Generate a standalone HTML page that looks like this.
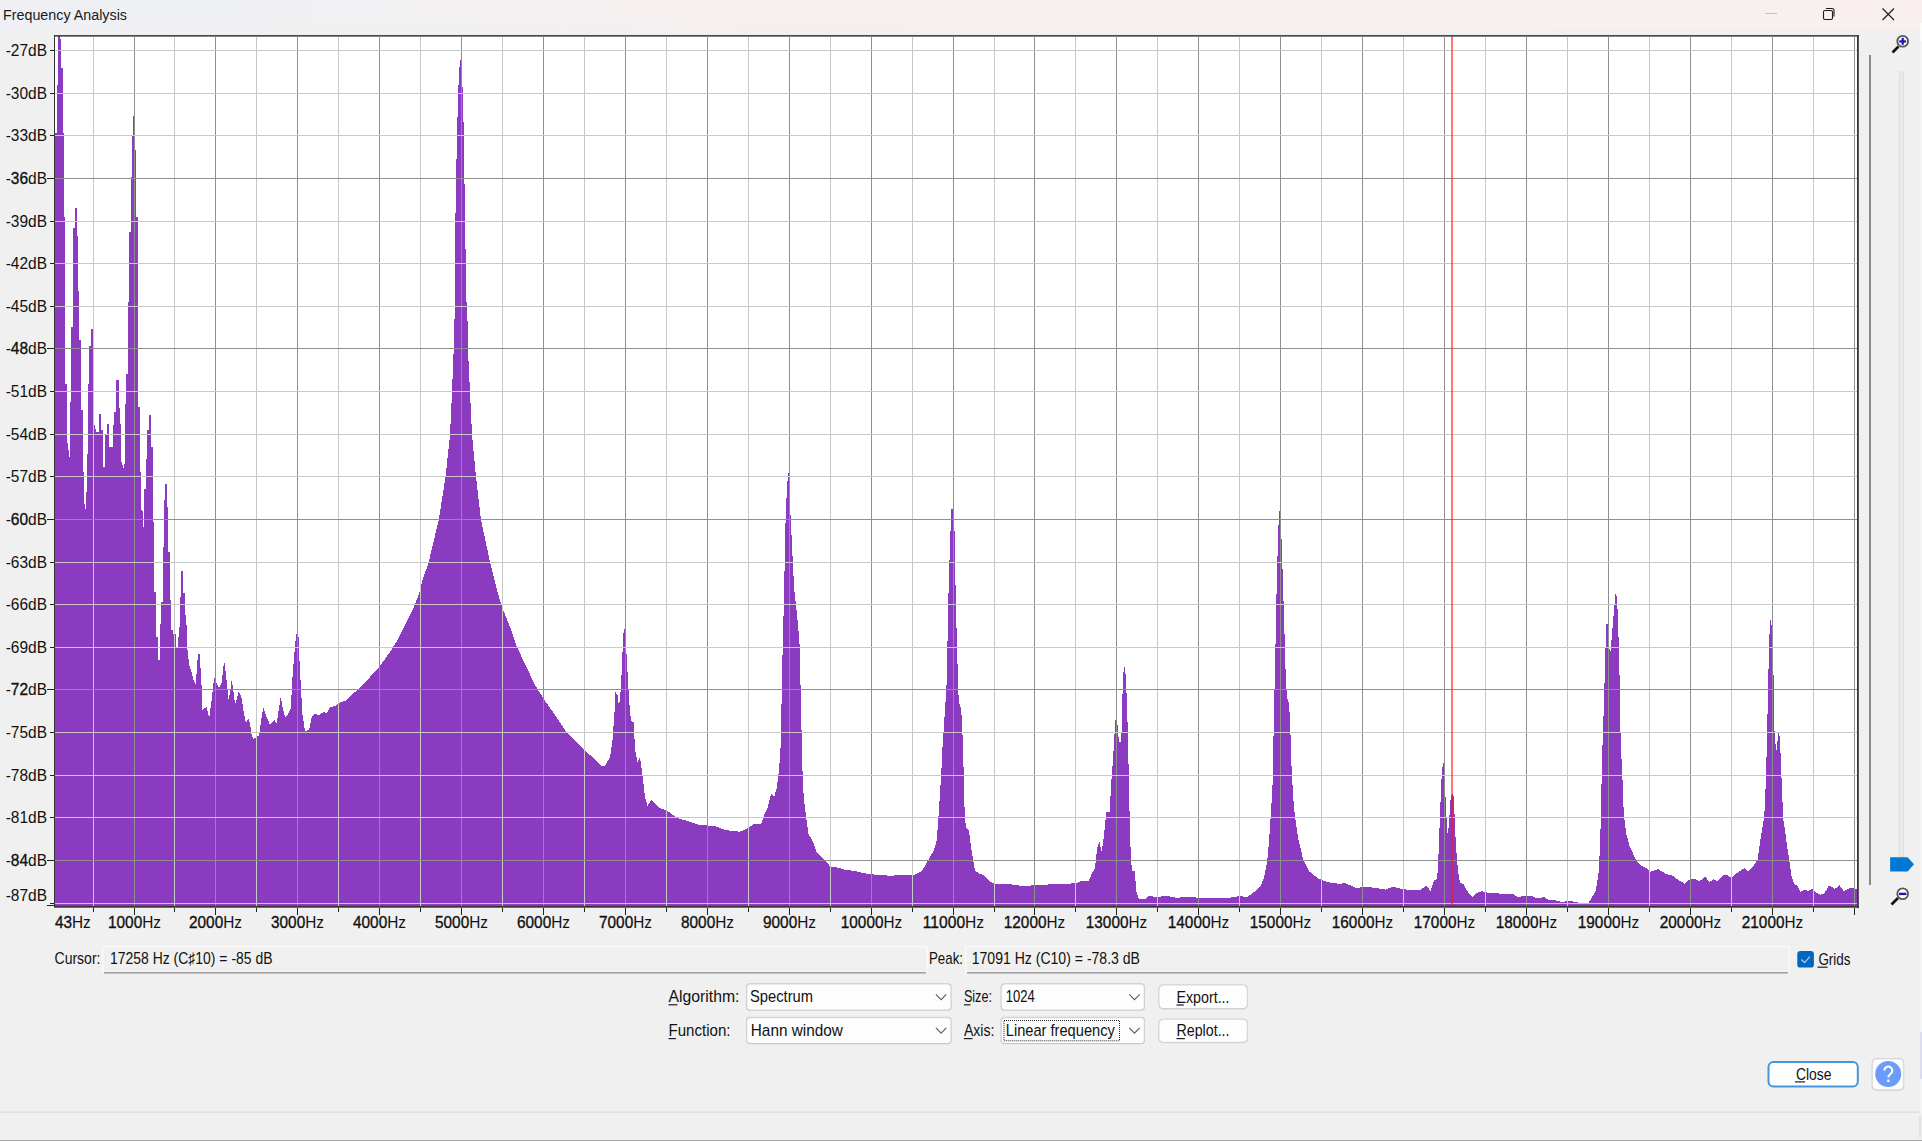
<!DOCTYPE html>
<html><head><meta charset="utf-8"><style>
html,body{margin:0;padding:0;width:1922px;height:1141px;overflow:hidden;background:#f0f0f0;}
</style></head><body>
<svg width="1922" height="1141" viewBox="0 0 1922 1141" style="position:absolute;left:0;top:0">
<defs><linearGradient id="tb" x1="0" x2="1" y1="0" y2="0"><stop offset="0" stop-color="#eef0f5"/><stop offset="0.1" stop-color="#eff0f4"/><stop offset="0.25" stop-color="#f3f0f1"/><stop offset="0.4" stop-color="#f7efee"/><stop offset="1" stop-color="#f8efee"/></linearGradient></defs>
<rect x="0" y="0" width="1922" height="1141" fill="#f0f0f0"/>
<rect x="0" y="0" width="1922" height="29" fill="url(#tb)"/>
<text x="3" y="19.7" font-family='"Liberation Sans", sans-serif' font-size="15.4" fill="#1a1a1a" textLength="124" lengthAdjust="spacingAndGlyphs">Frequency Analysis</text>
<rect x="1765" y="13" width="12" height="1" fill="#c4c0c0"/>
<g fill="none" stroke="#1a1a1a" stroke-width="1.1"><rect x="1823.5" y="10.5" width="9" height="9" rx="1.5"/><path d="M1826 8.5 h6 a2 2 0 0 1 2 2 v6"/></g>
<path d="M1882.5 8.5 L1894 20 M1894 8.5 L1882.5 20" stroke="#1a1a1a" stroke-width="1.1"/>
<rect x="54" y="35" width="1803" height="871" fill="#ffffff"/>
<path d="M55.0 906.0 L54.0 133.0 L56.5 133.0 L56.5 85.0 L57.9 85.0 L57.9 36.0 L59.6 36.0 L59.6 39.0 L61.4 39.0 L61.4 68.0 L62.6 68.0 L62.6 133.0 L63.7 133.0 L63.7 217.0 L65.0 217.0 L65.0 303.0 L65.2 384.0 L67.0 384.0 L67.0 440.0 L69.5 457.0 L69.5 402.0 L71.0 402.0 L71.0 327.0 L72.7 327.0 L72.7 300.0 L73.5 228.0 L74.7 228.0 L74.7 208.0 L76.5 208.0 L76.5 236.0 L77.7 236.0 L77.7 277.0 L79.0 300.0 L79.0 340.0 L81.0 340.0 L81.0 410.0 L82.7 410.0 L82.7 472.0 L84.0 472.0 L84.0 502.0 L86.0 511.0 L87.7 447.0 L89.0 346.0 L91.0 346.0 L91.0 329.0 L92.7 329.0 L92.7 387.0 L94.4 387.0 L94.4 425.0 L96.4 432.0 L99.0 432.0 L99.0 414.0 L101.0 414.0 L101.0 430.0 L102.7 430.0 L102.7 467.0 L104.7 467.0 L105.2 435.0 L107.0 435.0 L107.0 424.0 L109.0 424.0 L109.5 447.0 L112.7 447.0 L114.0 412.0 L115.7 412.0 L116.5 380.0 L118.5 380.0 L119.0 400.0 L121.0 432.0 L121.5 462.0 L124.4 471.0 L126.0 374.0 L127.7 374.0 L127.7 302.0 L129.4 302.0 L129.4 232.0 L130.9 232.0 L130.9 177.0 L132.0 177.0 L132.0 136.0 L132.7 136.0 L132.7 116.0 L134.0 116.0 L134.0 150.0 L136.0 150.0 L136.0 217.0 L137.6 217.0 L137.6 312.0 L137.6 407.0 L140.0 407.0 L140.0 472.0 L141.4 472.0 L141.4 510.0 L142.5 511.0 L142.5 527.0 L143.7 527.0 L144.0 489.0 L146.0 489.0 L147.0 430.0 L149.0 430.0 L149.0 415.0 L151.0 415.0 L151.0 447.0 L152.5 447.0 L152.5 488.0 L154.0 538.0 L154.0 592.0 L156.0 592.0 L156.0 637.0 L157.5 637.0 L157.5 660.0 L159.7 660.0 L161.0 602.0 L162.5 602.0 L162.5 547.0 L164.0 547.0 L164.0 500.0 L165.0 500.0 L165.0 484.0 L166.7 484.0 L166.7 507.0 L168.3 507.0 L168.3 552.0 L170.0 552.0 L170.0 600.0 L171.3 600.0 L171.3 630.0 L173.3 630.0 L173.3 634.0 L175.8 634.0 L175.8 648.0 L178.3 648.0 L178.7 627.0 L180.0 627.0 L180.0 597.0 L181.3 597.0 L181.3 571.0 L183.0 571.0 L183.0 593.0 L184.7 593.0 L184.7 615.0 L186.3 615.0 L186.7 633.0 L187.5 650.0 L189.2 665.0 L190.8 670.0 L194.2 682.0 L195.8 684.0 L197.5 660.0 L199.2 650.0 L200.3 664.0 L201.7 688.0 L202.5 710.0 L205.0 708.0 L206.7 707.0 L209.2 718.0 L211.7 700.0 L214.2 677.0 L216.7 683.0 L219.2 688.0 L221.7 683.0 L224.2 660.0 L225.8 673.0 L227.5 690.0 L228.3 700.0 L230.0 693.0 L231.7 679.0 L233.3 690.0 L235.0 704.0 L236.7 699.0 L238.7 691.0 L241.7 698.0 L243.3 710.0 L245.8 723.0 L248.3 719.0 L250.0 723.0 L251.7 735.0 L253.3 739.0 L256.7 737.0 L259.2 735.0 L261.7 717.0 L263.3 707.0 L265.8 715.0 L270.0 725.0 L274.2 720.0 L276.7 723.0 L279.2 707.0 L280.8 696.0 L282.5 707.0 L285.0 717.0 L288.3 714.0 L290.8 708.0 L292.5 677.0 L294.2 655.0 L295.8 638.0 L297.0 631.0 L298.3 632.0 L299.2 655.0 L300.8 686.0 L302.5 715.0 L305.0 731.0 L309.2 730.0 L311.7 717.0 L314.2 714.0 L319.2 715.0 L323.3 712.0 L326.7 713.0 L330.0 707.5 L335.0 706.0 L338.3 703.0 L345.0 701.0 L355.0 692.0 L362.5 685.0 L370.0 677.0 L380.0 666.0 L390.0 652.0 L397.5 640.0 L405.0 625.0 L412.5 610.0 L418.7 595.0 L422.5 580.0 L426.0 570.0 L428.7 562.0 L438.7 520.0 L445.5 477.0 L450.0 435.0 L452.0 392.0 L453.7 350.0 L455.0 300.0 L455.0 243.5 L456.2 172.0 L457.5 117.0 L458.7 80.0 L460.0 60.0 L461.7 60.0 L461.7 87.0 L463.0 87.0 L463.7 135.0 L465.0 213.0 L466.2 296.0 L467.5 321.0 L468.0 350.0 L470.0 392.0 L472.0 435.0 L476.0 477.0 L481.0 520.0 L490.0 562.0 L492.0 570.0 L497.0 590.0 L502.0 607.0 L510.0 627.0 L517.0 647.0 L525.0 664.0 L535.0 685.0 L543.7 699.0 L555.0 715.0 L565.0 730.0 L575.0 741.0 L585.0 751.0 L595.0 759.0 L601.0 766.0 L605.0 766.0 L610.0 757.0 L612.5 740.0 L614.5 712.0 L615.5 692.0 L617.5 695.0 L619.0 707.0 L621.0 687.0 L622.5 652.0 L623.7 630.0 L625.0 629.0 L626.0 644.0 L627.5 672.0 L629.5 705.0 L631.0 721.0 L633.7 722.0 L635.0 750.0 L637.5 762.0 L640.0 757.0 L642.5 775.0 L645.0 797.0 L647.5 806.0 L651.0 800.0 L660.0 808.0 L667.5 811.0 L677.5 818.0 L687.5 821.0 L700.0 825.0 L715.0 826.0 L725.0 830.0 L740.0 831.7 L746.5 829.0 L754.7 823.5 L761.2 824.4 L764.5 813.8 L767.7 808.0 L771.0 793.4 L774.2 796.6 L776.7 788.5 L778.8 772.0 L780.4 752.6 L781.2 720.0 L782.5 655.0 L784.2 589.0 L785.2 531.0 L786.7 494.0 L788.0 472.5 L789.0 472.5 L790.0 505.0 L791.7 539.0 L793.0 566.0 L794.2 589.0 L796.2 607.0 L798.0 625.0 L799.5 644.0 L800.7 692.0 L801.2 720.0 L802.0 746.0 L802.8 785.0 L804.4 803.0 L806.0 816.0 L808.5 834.0 L812.6 840.7 L816.6 852.0 L823.2 858.6 L830.5 866.7 L837.8 867.6 L846.0 870.0 L854.0 870.8 L864.0 873.3 L878.6 875.0 L890.0 875.7 L903.0 875.0 L914.5 875.0 L921.0 871.6 L924.2 867.6 L929.0 858.6 L934.0 850.4 L936.5 840.7 L938.0 824.4 L939.7 798.0 L941.2 775.0 L942.5 747.5 L945.0 710.0 L946.5 685.0 L947.5 641.0 L948.7 584.0 L950.5 531.0 L951.5 509.0 L952.7 509.0 L954.5 531.0 L955.5 585.0 L957.0 649.0 L958.7 701.0 L960.7 707.5 L962.0 720.0 L963.4 760.8 L964.2 801.5 L965.8 827.6 L969.0 831.0 L971.5 850.4 L974.8 870.0 L978.4 873.2 L984.0 875.4 L990.7 882.0 L997.4 884.4 L1010.9 884.4 L1022.0 886.0 L1042.3 884.9 L1055.8 884.0 L1077.0 883.3 L1080.4 881.0 L1088.3 881.0 L1091.6 874.3 L1095.0 867.6 L1097.3 847.4 L1099.5 841.8 L1101.7 852.0 L1104.0 835.0 L1106.2 812.6 L1109.6 811.5 L1111.4 780.0 L1113.0 760.0 L1114.5 734.0 L1115.9 715.0 L1117.4 724.0 L1119.0 742.0 L1121.3 742.0 L1122.0 710.6 L1123.0 677.0 L1124.2 664.6 L1125.7 675.8 L1127.0 702.7 L1128.2 747.6 L1129.3 803.7 L1130.7 854.0 L1132.0 871.0 L1134.7 871.0 L1136.5 892.3 L1138.7 899.0 L1145.5 899.0 L1148.8 895.6 L1156.7 897.4 L1165.7 895.6 L1176.9 897.9 L1188.0 896.7 L1199.3 897.9 L1210.0 897.7 L1226.3 898.5 L1239.3 896.0 L1247.5 897.0 L1254.0 892.0 L1260.5 886.3 L1263.8 878.0 L1266.3 866.7 L1267.9 855.3 L1269.5 834.0 L1271.1 811.0 L1272.5 785.0 L1273.0 760.0 L1274.2 704.0 L1275.5 644.0 L1276.7 585.0 L1278.0 539.0 L1279.0 511.0 L1280.2 511.0 L1281.2 530.0 L1282.5 569.0 L1284.2 622.5 L1285.7 675.0 L1287.0 697.5 L1289.0 704.0 L1290.0 720.0 L1291.5 765.7 L1293.2 798.0 L1294.8 814.6 L1298.0 837.4 L1303.0 858.6 L1309.5 871.6 L1317.6 878.2 L1327.4 882.2 L1340.4 883.9 L1344.5 883.0 L1356.7 888.0 L1366.5 886.6 L1386.0 889.6 L1392.6 886.6 L1400.8 888.8 L1412.2 890.4 L1420.0 890.4 L1426.5 885.5 L1430.6 891.2 L1433.9 880.6 L1437.1 879.0 L1438.0 866.7 L1439.2 836.6 L1440.4 804.0 L1441.5 779.5 L1442.8 763.2 L1444.0 763.2 L1444.5 777.0 L1446.1 808.9 L1447.4 834.0 L1449.0 826.0 L1450.2 801.5 L1451.8 794.2 L1453.4 794.2 L1454.6 816.2 L1455.5 837.4 L1456.7 856.0 L1458.3 873.3 L1460.0 883.0 L1463.2 883.9 L1467.3 891.2 L1472.2 897.0 L1477.0 892.8 L1482.0 891.2 L1488.5 892.8 L1501.5 893.7 L1513.0 894.0 L1517.8 897.0 L1524.4 896.0 L1530.9 895.8 L1537.4 898.5 L1544.0 897.0 L1548.8 900.0 L1558.6 900.7 L1561.9 902.3 L1566.7 901.0 L1576.5 901.8 L1581.4 904.0 L1588.0 903.4 L1592.8 896.0 L1596.0 889.6 L1598.5 873.3 L1600.2 844.0 L1601.2 796.0 L1602.5 745.0 L1604.2 696.0 L1605.2 654.0 L1606.5 624.0 L1607.5 624.0 L1608.7 642.5 L1610.2 654.0 L1611.5 640.0 L1613.2 620.0 L1615.5 594.0 L1617.0 597.5 L1618.2 624.0 L1619.5 675.0 L1620.5 732.5 L1622.0 771.0 L1622.2 772.0 L1623.8 814.6 L1626.3 834.0 L1629.5 845.5 L1635.2 858.6 L1640.0 865.0 L1646.5 868.3 L1650.6 871.6 L1657.9 869.1 L1666.0 874.0 L1672.6 875.6 L1679.1 880.5 L1684.8 883.8 L1688.9 879.7 L1695.4 878.9 L1699.5 881.3 L1705.2 876.5 L1709.3 882.6 L1713.3 878.9 L1717.4 881.3 L1723.9 874.8 L1728.0 875.6 L1731.3 878.0 L1737.8 872.4 L1744.3 868.3 L1748.4 871.6 L1752.4 867.5 L1755.7 862.6 L1757.5 860.0 L1760.0 842.5 L1763.7 820.0 L1765.0 805.0 L1766.7 751.0 L1768.0 691.0 L1769.2 639.0 L1770.7 617.5 L1772.5 634.0 L1773.7 682.5 L1774.5 731.0 L1776.2 752.5 L1778.7 730.0 L1780.0 740.0 L1781.2 770.0 L1783.2 819.0 L1784.7 827.6 L1786.7 843.9 L1789.1 858.5 L1791.6 876.5 L1794.0 883.8 L1797.3 885.4 L1800.5 892.0 L1804.6 889.5 L1807.9 891.1 L1812.0 888.7 L1816.0 892.8 L1820.9 894.7 L1824.2 893.6 L1829.0 885.4 L1834.8 888.7 L1839.6 885.4 L1843.7 891.1 L1850.2 887.9 L1856.7 888.7 L1857.0 906.0 Z" fill="#8b3bbf" shape-rendering="crispEdges"/>
<g shape-rendering="crispEdges"><rect x="93" y="37" width="1" height="869" fill="#c8c8c8"/><rect x="134" y="37" width="1" height="869" fill="#8e8e8e"/><rect x="174" y="37" width="1" height="869" fill="#c8c8c8"/><rect x="215" y="37" width="1" height="869" fill="#8e8e8e"/><rect x="256" y="37" width="1" height="869" fill="#c8c8c8"/><rect x="297" y="37" width="1" height="869" fill="#8e8e8e"/><rect x="338" y="37" width="1" height="869" fill="#c8c8c8"/><rect x="379" y="37" width="1" height="869" fill="#8e8e8e"/><rect x="420" y="37" width="1" height="869" fill="#c8c8c8"/><rect x="461" y="37" width="1" height="869" fill="#8e8e8e"/><rect x="502" y="37" width="1" height="869" fill="#c8c8c8"/><rect x="543" y="37" width="1" height="869" fill="#8e8e8e"/><rect x="584" y="37" width="1" height="869" fill="#c8c8c8"/><rect x="625" y="37" width="1" height="869" fill="#8e8e8e"/><rect x="666" y="37" width="1" height="869" fill="#c8c8c8"/><rect x="707" y="37" width="1" height="869" fill="#8e8e8e"/><rect x="748" y="37" width="1" height="869" fill="#c8c8c8"/><rect x="789" y="37" width="1" height="869" fill="#8e8e8e"/><rect x="830" y="37" width="1" height="869" fill="#c8c8c8"/><rect x="871" y="37" width="1" height="869" fill="#8e8e8e"/><rect x="912" y="37" width="1" height="869" fill="#c8c8c8"/><rect x="953" y="37" width="1" height="869" fill="#8e8e8e"/><rect x="994" y="37" width="1" height="869" fill="#c8c8c8"/><rect x="1034" y="37" width="1" height="869" fill="#8e8e8e"/><rect x="1075" y="37" width="1" height="869" fill="#c8c8c8"/><rect x="1116" y="37" width="1" height="869" fill="#8e8e8e"/><rect x="1157" y="37" width="1" height="869" fill="#c8c8c8"/><rect x="1198" y="37" width="1" height="869" fill="#8e8e8e"/><rect x="1239" y="37" width="1" height="869" fill="#c8c8c8"/><rect x="1280" y="37" width="1" height="869" fill="#8e8e8e"/><rect x="1321" y="37" width="1" height="869" fill="#c8c8c8"/><rect x="1362" y="37" width="1" height="869" fill="#8e8e8e"/><rect x="1403" y="37" width="1" height="869" fill="#c8c8c8"/><rect x="1444" y="37" width="1" height="869" fill="#8e8e8e"/><rect x="1485" y="37" width="1" height="869" fill="#c8c8c8"/><rect x="1526" y="37" width="1" height="869" fill="#8e8e8e"/><rect x="1567" y="37" width="1" height="869" fill="#c8c8c8"/><rect x="1608" y="37" width="1" height="869" fill="#8e8e8e"/><rect x="1649" y="37" width="1" height="869" fill="#c8c8c8"/><rect x="1690" y="37" width="1" height="869" fill="#8e8e8e"/><rect x="1731" y="37" width="1" height="869" fill="#c8c8c8"/><rect x="1772" y="37" width="1" height="869" fill="#8e8e8e"/><rect x="1813" y="37" width="1" height="869" fill="#c8c8c8"/><rect x="1854" y="37" width="1" height="869" fill="#8e8e8e"/><rect x="55" y="50" width="1802" height="1" fill="#c8c8c8"/><rect x="55" y="93" width="1802" height="1" fill="#c8c8c8"/><rect x="55" y="135" width="1802" height="1" fill="#c8c8c8"/><rect x="55" y="178" width="1802" height="1" fill="#8e8e8e"/><rect x="55" y="221" width="1802" height="1" fill="#c8c8c8"/><rect x="55" y="263" width="1802" height="1" fill="#c8c8c8"/><rect x="55" y="306" width="1802" height="1" fill="#c8c8c8"/><rect x="55" y="348" width="1802" height="1" fill="#8e8e8e"/><rect x="55" y="391" width="1802" height="1" fill="#c8c8c8"/><rect x="55" y="434" width="1802" height="1" fill="#c8c8c8"/><rect x="55" y="476" width="1802" height="1" fill="#c8c8c8"/><rect x="55" y="519" width="1802" height="1" fill="#8e8e8e"/><rect x="55" y="562" width="1802" height="1" fill="#c8c8c8"/><rect x="55" y="604" width="1802" height="1" fill="#c8c8c8"/><rect x="55" y="647" width="1802" height="1" fill="#c8c8c8"/><rect x="55" y="689" width="1802" height="1" fill="#8e8e8e"/><rect x="55" y="732" width="1802" height="1" fill="#c8c8c8"/><rect x="55" y="775" width="1802" height="1" fill="#c8c8c8"/><rect x="55" y="817" width="1802" height="1" fill="#c8c8c8"/><rect x="55" y="860" width="1802" height="1" fill="#8e8e8e"/><rect x="55" y="903" width="1802" height="1" fill="#c8c8c8"/></g>
<rect x="1451" y="36" width="2" height="870" fill="#ff1414" fill-opacity="0.58" shape-rendering="crispEdges"/>
<g fill="#353535"><rect x="54" y="35.1" width="1804.8" height="1.5"/><rect x="54" y="35.1" width="1" height="872"/><rect x="1857" y="35.1" width="1.8" height="873"/><rect x="54" y="905.9" width="1804.8" height="1.8"/></g>
<g shape-rendering="crispEdges"><rect x="50" y="50" width="4" height="1" fill="#222"/><rect x="50" y="93" width="4" height="1" fill="#222"/><rect x="50" y="135" width="4" height="1" fill="#222"/><rect x="47" y="178" width="7" height="1" fill="#222"/><rect x="50" y="221" width="4" height="1" fill="#222"/><rect x="50" y="263" width="4" height="1" fill="#222"/><rect x="50" y="306" width="4" height="1" fill="#222"/><rect x="47" y="348" width="7" height="1" fill="#222"/><rect x="50" y="391" width="4" height="1" fill="#222"/><rect x="50" y="434" width="4" height="1" fill="#222"/><rect x="50" y="476" width="4" height="1" fill="#222"/><rect x="47" y="519" width="7" height="1" fill="#222"/><rect x="50" y="562" width="4" height="1" fill="#222"/><rect x="50" y="604" width="4" height="1" fill="#222"/><rect x="50" y="647" width="4" height="1" fill="#222"/><rect x="47" y="689" width="7" height="1" fill="#222"/><rect x="50" y="732" width="4" height="1" fill="#222"/><rect x="50" y="775" width="4" height="1" fill="#222"/><rect x="50" y="817" width="4" height="1" fill="#222"/><rect x="47" y="860" width="7" height="1" fill="#222"/><rect x="50" y="903" width="4" height="1" fill="#222"/><rect x="47" y="905" width="7" height="1" fill="#222"/></g>
<g shape-rendering="crispEdges"><rect x="93" y="908" width="1" height="4" fill="#222"/><rect x="134" y="908" width="1" height="7" fill="#222"/><rect x="174" y="908" width="1" height="4" fill="#222"/><rect x="215" y="908" width="1" height="7" fill="#222"/><rect x="256" y="908" width="1" height="4" fill="#222"/><rect x="297" y="908" width="1" height="7" fill="#222"/><rect x="338" y="908" width="1" height="4" fill="#222"/><rect x="379" y="908" width="1" height="7" fill="#222"/><rect x="420" y="908" width="1" height="4" fill="#222"/><rect x="461" y="908" width="1" height="7" fill="#222"/><rect x="502" y="908" width="1" height="4" fill="#222"/><rect x="543" y="908" width="1" height="7" fill="#222"/><rect x="584" y="908" width="1" height="4" fill="#222"/><rect x="625" y="908" width="1" height="7" fill="#222"/><rect x="666" y="908" width="1" height="4" fill="#222"/><rect x="707" y="908" width="1" height="7" fill="#222"/><rect x="748" y="908" width="1" height="4" fill="#222"/><rect x="789" y="908" width="1" height="7" fill="#222"/><rect x="830" y="908" width="1" height="4" fill="#222"/><rect x="871" y="908" width="1" height="7" fill="#222"/><rect x="912" y="908" width="1" height="4" fill="#222"/><rect x="953" y="908" width="1" height="7" fill="#222"/><rect x="994" y="908" width="1" height="4" fill="#222"/><rect x="1034" y="908" width="1" height="7" fill="#222"/><rect x="1075" y="908" width="1" height="4" fill="#222"/><rect x="1116" y="908" width="1" height="7" fill="#222"/><rect x="1157" y="908" width="1" height="4" fill="#222"/><rect x="1198" y="908" width="1" height="7" fill="#222"/><rect x="1239" y="908" width="1" height="4" fill="#222"/><rect x="1280" y="908" width="1" height="7" fill="#222"/><rect x="1321" y="908" width="1" height="4" fill="#222"/><rect x="1362" y="908" width="1" height="7" fill="#222"/><rect x="1403" y="908" width="1" height="4" fill="#222"/><rect x="1444" y="908" width="1" height="7" fill="#222"/><rect x="1485" y="908" width="1" height="4" fill="#222"/><rect x="1526" y="908" width="1" height="7" fill="#222"/><rect x="1567" y="908" width="1" height="4" fill="#222"/><rect x="1608" y="908" width="1" height="7" fill="#222"/><rect x="1649" y="908" width="1" height="4" fill="#222"/><rect x="1690" y="908" width="1" height="7" fill="#222"/><rect x="1731" y="908" width="1" height="4" fill="#222"/><rect x="1772" y="908" width="1" height="7" fill="#222"/><rect x="1813" y="908" width="1" height="4" fill="#222"/><rect x="1854" y="908" width="1" height="7" fill="#222"/></g>
<g font-family='"Liberation Sans", sans-serif' fill="#111"><text x="47" y="56" text-anchor="end" font-size="16" textLength="41.3" lengthAdjust="spacingAndGlyphs">-<tspan>27</tspan>dB</text><text x="47" y="99" text-anchor="end" font-size="16" textLength="41.3" lengthAdjust="spacingAndGlyphs">-<tspan>30</tspan>dB</text><text x="47" y="141" text-anchor="end" font-size="16" textLength="41.3" lengthAdjust="spacingAndGlyphs">-<tspan>33</tspan>dB</text><text x="47" y="184" text-anchor="end" font-size="16" textLength="41.3" lengthAdjust="spacingAndGlyphs">-<tspan stroke="#111" stroke-width="0.35">36</tspan>dB</text><text x="47" y="227" text-anchor="end" font-size="16" textLength="41.3" lengthAdjust="spacingAndGlyphs">-<tspan>39</tspan>dB</text><text x="47" y="269" text-anchor="end" font-size="16" textLength="41.3" lengthAdjust="spacingAndGlyphs">-<tspan>42</tspan>dB</text><text x="47" y="312" text-anchor="end" font-size="16" textLength="41.3" lengthAdjust="spacingAndGlyphs">-<tspan>45</tspan>dB</text><text x="47" y="354" text-anchor="end" font-size="16" textLength="41.3" lengthAdjust="spacingAndGlyphs">-<tspan stroke="#111" stroke-width="0.35">48</tspan>dB</text><text x="47" y="397" text-anchor="end" font-size="16" textLength="41.3" lengthAdjust="spacingAndGlyphs">-<tspan>51</tspan>dB</text><text x="47" y="440" text-anchor="end" font-size="16" textLength="41.3" lengthAdjust="spacingAndGlyphs">-<tspan>54</tspan>dB</text><text x="47" y="482" text-anchor="end" font-size="16" textLength="41.3" lengthAdjust="spacingAndGlyphs">-<tspan>57</tspan>dB</text><text x="47" y="525" text-anchor="end" font-size="16" textLength="41.3" lengthAdjust="spacingAndGlyphs">-<tspan stroke="#111" stroke-width="0.35">60</tspan>dB</text><text x="47" y="568" text-anchor="end" font-size="16" textLength="41.3" lengthAdjust="spacingAndGlyphs">-<tspan>63</tspan>dB</text><text x="47" y="610" text-anchor="end" font-size="16" textLength="41.3" lengthAdjust="spacingAndGlyphs">-<tspan>66</tspan>dB</text><text x="47" y="653" text-anchor="end" font-size="16" textLength="41.3" lengthAdjust="spacingAndGlyphs">-<tspan>69</tspan>dB</text><text x="47" y="695" text-anchor="end" font-size="16" textLength="41.3" lengthAdjust="spacingAndGlyphs">-<tspan stroke="#111" stroke-width="0.35">72</tspan>dB</text><text x="47" y="738" text-anchor="end" font-size="16" textLength="41.3" lengthAdjust="spacingAndGlyphs">-<tspan>75</tspan>dB</text><text x="47" y="781" text-anchor="end" font-size="16" textLength="41.3" lengthAdjust="spacingAndGlyphs">-<tspan>78</tspan>dB</text><text x="47" y="823" text-anchor="end" font-size="16" textLength="41.3" lengthAdjust="spacingAndGlyphs">-<tspan>81</tspan>dB</text><text x="47" y="866" text-anchor="end" font-size="16" textLength="41.3" lengthAdjust="spacingAndGlyphs">-<tspan stroke="#111" stroke-width="0.35">84</tspan>dB</text><text x="47" y="900.7" text-anchor="end" font-size="16" textLength="41.3" lengthAdjust="spacingAndGlyphs">-<tspan>87</tspan>dB</text><text x="134.5" y="927.6" text-anchor="middle" font-size="16.4" textLength="53.0" lengthAdjust="spacingAndGlyphs"><tspan stroke="#111" stroke-width="0.35">1000</tspan>Hz</text><text x="215.5" y="927.6" text-anchor="middle" font-size="16.4" textLength="53.0" lengthAdjust="spacingAndGlyphs"><tspan stroke="#111" stroke-width="0.35">2000</tspan>Hz</text><text x="297.5" y="927.6" text-anchor="middle" font-size="16.4" textLength="53.0" lengthAdjust="spacingAndGlyphs"><tspan stroke="#111" stroke-width="0.35">3000</tspan>Hz</text><text x="379.5" y="927.6" text-anchor="middle" font-size="16.4" textLength="53.0" lengthAdjust="spacingAndGlyphs"><tspan stroke="#111" stroke-width="0.35">4000</tspan>Hz</text><text x="461.5" y="927.6" text-anchor="middle" font-size="16.4" textLength="53.0" lengthAdjust="spacingAndGlyphs"><tspan stroke="#111" stroke-width="0.35">5000</tspan>Hz</text><text x="543.5" y="927.6" text-anchor="middle" font-size="16.4" textLength="53.0" lengthAdjust="spacingAndGlyphs"><tspan stroke="#111" stroke-width="0.35">6000</tspan>Hz</text><text x="625.5" y="927.6" text-anchor="middle" font-size="16.4" textLength="53.0" lengthAdjust="spacingAndGlyphs"><tspan stroke="#111" stroke-width="0.35">7000</tspan>Hz</text><text x="707.5" y="927.6" text-anchor="middle" font-size="16.4" textLength="53.0" lengthAdjust="spacingAndGlyphs"><tspan stroke="#111" stroke-width="0.35">8000</tspan>Hz</text><text x="789.5" y="927.6" text-anchor="middle" font-size="16.4" textLength="53.0" lengthAdjust="spacingAndGlyphs"><tspan stroke="#111" stroke-width="0.35">9000</tspan>Hz</text><text x="871.5" y="927.6" text-anchor="middle" font-size="16.4" textLength="61.3" lengthAdjust="spacingAndGlyphs"><tspan stroke="#111" stroke-width="0.35">10000</tspan>Hz</text><text x="953.5" y="927.6" text-anchor="middle" font-size="16.4" textLength="61.3" lengthAdjust="spacingAndGlyphs"><tspan stroke="#111" stroke-width="0.35">11000</tspan>Hz</text><text x="1034.5" y="927.6" text-anchor="middle" font-size="16.4" textLength="61.3" lengthAdjust="spacingAndGlyphs"><tspan stroke="#111" stroke-width="0.35">12000</tspan>Hz</text><text x="1116.5" y="927.6" text-anchor="middle" font-size="16.4" textLength="61.3" lengthAdjust="spacingAndGlyphs"><tspan stroke="#111" stroke-width="0.35">13000</tspan>Hz</text><text x="1198.5" y="927.6" text-anchor="middle" font-size="16.4" textLength="61.3" lengthAdjust="spacingAndGlyphs"><tspan stroke="#111" stroke-width="0.35">14000</tspan>Hz</text><text x="1280.5" y="927.6" text-anchor="middle" font-size="16.4" textLength="61.3" lengthAdjust="spacingAndGlyphs"><tspan stroke="#111" stroke-width="0.35">15000</tspan>Hz</text><text x="1362.5" y="927.6" text-anchor="middle" font-size="16.4" textLength="61.3" lengthAdjust="spacingAndGlyphs"><tspan stroke="#111" stroke-width="0.35">16000</tspan>Hz</text><text x="1444.5" y="927.6" text-anchor="middle" font-size="16.4" textLength="61.3" lengthAdjust="spacingAndGlyphs"><tspan stroke="#111" stroke-width="0.35">17000</tspan>Hz</text><text x="1526.5" y="927.6" text-anchor="middle" font-size="16.4" textLength="61.3" lengthAdjust="spacingAndGlyphs"><tspan stroke="#111" stroke-width="0.35">18000</tspan>Hz</text><text x="1608.5" y="927.6" text-anchor="middle" font-size="16.4" textLength="61.3" lengthAdjust="spacingAndGlyphs"><tspan stroke="#111" stroke-width="0.35">19000</tspan>Hz</text><text x="1690.5" y="927.6" text-anchor="middle" font-size="16.4" textLength="61.3" lengthAdjust="spacingAndGlyphs"><tspan stroke="#111" stroke-width="0.35">20000</tspan>Hz</text><text x="1772.5" y="927.6" text-anchor="middle" font-size="16.4" textLength="61.3" lengthAdjust="spacingAndGlyphs"><tspan stroke="#111" stroke-width="0.35">21000</tspan>Hz</text><text x="55" y="927.6" font-size="16.4" textLength="35.8" lengthAdjust="spacingAndGlyphs"><tspan stroke="#111" stroke-width="0.35">43</tspan>Hz</text></g>
<g font-family='"Liberation Sans", sans-serif'><rect x="102.5" y="946.5" width="825" height="26" rx="3" fill="#f0f0f0" stroke="#f9f9f9" stroke-width="1.5"/><rect x="104" y="972" width="822" height="1.6" fill="#a2a2a2"/><rect x="965.5" y="946.5" width="824" height="26" rx="3" fill="#f0f0f0" stroke="#f9f9f9" stroke-width="1.5"/><rect x="967" y="972" width="821" height="1.6" fill="#a2a2a2"/><text x="54.5" y="964.2" font-size="16.6" text-anchor="start" fill="#111" textLength="46" lengthAdjust="spacingAndGlyphs">Cursor:</text><text x="110" y="964.2" font-size="16.6" text-anchor="start" fill="#111" textLength="162.5" lengthAdjust="spacingAndGlyphs">17258 Hz (C&#9839;10) = -85 dB</text><text x="929" y="964.2" font-size="16.6" text-anchor="start" fill="#111" textLength="34" lengthAdjust="spacingAndGlyphs">Peak:</text><text x="971.7" y="964.2" font-size="16.6" text-anchor="start" fill="#111" textLength="168.3" lengthAdjust="spacingAndGlyphs">17091 Hz (C10) = -78.3 dB</text><rect x="1797.3" y="951" width="16.6" height="16.6" rx="3.2" fill="#0067c0"/><path d="M1801.3 959.6 L1804.6 962.6 L1809.9 956.6" fill="none" stroke="#a9c9ef" stroke-width="1.3"/><text x="1818.4" y="964.8" font-size="16.6" text-anchor="start" fill="#111" textLength="32.2" lengthAdjust="spacingAndGlyphs">Grids</text><rect x="1817.5" y="966.6" width="10.099999999999909" height="1.2" fill="#222"/><rect x="746" y="983.3" width="205.60000000000002" height="27.5" rx="4" fill="#c9c9c9"/><rect x="746.7" y="984.0" width="204.20000000000002" height="25.5" rx="3.5" fill="#e3e3e3"/><rect x="747.4" y="984.6999999999999" width="202.8" height="24.7" rx="3" fill="#fdfdfd"/><path d="M935.9 994.4499999999999 L941.1 999.65 L946.3000000000001 994.4499999999999" fill="none" stroke="#5c5c5c" stroke-width="1.1"/><rect x="746" y="1016.8" width="205.60000000000002" height="27.5" rx="4" fill="#c9c9c9"/><rect x="746.7" y="1017.5" width="204.20000000000002" height="25.5" rx="3.5" fill="#e3e3e3"/><rect x="747.4" y="1018.1999999999999" width="202.8" height="24.7" rx="3" fill="#fdfdfd"/><path d="M935.9 1027.95 L941.1 1033.1499999999999 L946.3000000000001 1027.95" fill="none" stroke="#5c5c5c" stroke-width="1.1"/><rect x="1000.6" y="983.3" width="144.39999999999998" height="27.5" rx="4" fill="#c9c9c9"/><rect x="1001.3000000000001" y="984.0" width="142.99999999999997" height="25.5" rx="3.5" fill="#e3e3e3"/><rect x="1002.0" y="984.6999999999999" width="141.59999999999997" height="24.7" rx="3" fill="#fdfdfd"/><path d="M1129.3 994.4499999999999 L1134.5 999.65 L1139.7 994.4499999999999" fill="none" stroke="#5c5c5c" stroke-width="1.1"/><rect x="1000.6" y="1016.8" width="144.39999999999998" height="27.5" rx="4" fill="#c9c9c9"/><rect x="1001.3000000000001" y="1017.5" width="142.99999999999997" height="25.5" rx="3.5" fill="#e3e3e3"/><rect x="1002.0" y="1018.1999999999999" width="141.59999999999997" height="24.7" rx="3" fill="#fdfdfd"/><path d="M1129.3 1027.95 L1134.5 1033.1499999999999 L1139.7 1027.95" fill="none" stroke="#5c5c5c" stroke-width="1.1"/><text x="668.5" y="1001.8" font-size="16.6" text-anchor="start" fill="#111" textLength="71" lengthAdjust="spacingAndGlyphs">Algorithm:</text><rect x="668.5" y="1004.2" width="9.0" height="1.2" fill="#222"/><text x="750" y="1001.8" font-size="16.6" text-anchor="start" fill="#111" textLength="63" lengthAdjust="spacingAndGlyphs">Spectrum</text><text x="668.5" y="1035.6" font-size="16.6" text-anchor="start" fill="#111" textLength="62" lengthAdjust="spacingAndGlyphs">Function:</text><rect x="668.5" y="1038" width="7.5" height="1.2" fill="#222"/><text x="750.8" y="1035.6" font-size="16.6" text-anchor="start" fill="#111" textLength="92" lengthAdjust="spacingAndGlyphs">Hann window</text><text x="963.9" y="1001.8" font-size="16.6" text-anchor="start" fill="#111" textLength="28" lengthAdjust="spacingAndGlyphs">Size:</text><rect x="963.9" y="1004.2" width="6.600000000000023" height="1.2" fill="#222"/><text x="1005.8" y="1001.8" font-size="16.6" text-anchor="start" fill="#111" textLength="29" lengthAdjust="spacingAndGlyphs">1024</text><text x="963.9" y="1035.6" font-size="16.6" text-anchor="start" fill="#111" textLength="30.6" lengthAdjust="spacingAndGlyphs">Axis:</text><rect x="963.9" y="1038" width="8.600000000000023" height="1.2" fill="#222"/><text x="1005.8" y="1035.6" font-size="16.6" text-anchor="start" fill="#111" textLength="109" lengthAdjust="spacingAndGlyphs">Linear frequency</text><rect x="1004" y="1020.5" width="115.5" height="20.3" fill="none" stroke="#222" stroke-width="1" stroke-dasharray="1 1"/><rect x="1158.2" y="984.3" width="89.89999999999986" height="25.200000000000045" rx="5" fill="#d2d2d2"/><rect x="1159.0" y="985.0999999999999" width="88.29999999999987" height="23.000000000000046" rx="4.5" fill="#e5e5e5"/><rect x="1159.7" y="985.8" width="86.89999999999986" height="22.200000000000045" rx="4" fill="#fdfdfd"/><rect x="1158.2" y="1018.4" width="89.89999999999986" height="24.899999999999977" rx="5" fill="#d2d2d2"/><rect x="1159.0" y="1019.1999999999999" width="88.29999999999987" height="22.699999999999978" rx="4.5" fill="#e5e5e5"/><rect x="1159.7" y="1019.9" width="86.89999999999986" height="21.899999999999977" rx="4" fill="#fdfdfd"/><text x="1176.5" y="1002.6" font-size="16.6" text-anchor="start" fill="#111" textLength="53" lengthAdjust="spacingAndGlyphs">Export...</text><rect x="1176.5" y="1004.4" width="7.2999999999999545" height="1.2" fill="#222"/><text x="1176.5" y="1035.7" font-size="16.6" text-anchor="start" fill="#111" textLength="53" lengthAdjust="spacingAndGlyphs">Replot...</text><rect x="1176.5" y="1038" width="8.299999999999955" height="1.2" fill="#222"/><rect x="1768.5" y="1062" width="89.3" height="24.5" rx="5" fill="#ffffff" stroke="#4595dc" stroke-width="2"/><text x="1795.9" y="1079.8" font-size="16.6" text-anchor="start" fill="#111" textLength="35.5" lengthAdjust="spacingAndGlyphs">Close</text><rect x="1795" y="1081.3" width="10" height="1.2" fill="#222"/><rect x="1871.6" y="1058" width="32.700000000000045" height="32.700000000000045" rx="5" fill="#d2d2d2"/><rect x="1872.3999999999999" y="1058.8" width="31.100000000000044" height="30.500000000000046" rx="4.5" fill="#e5e5e5"/><rect x="1873.1" y="1059.5" width="29.700000000000045" height="29.700000000000045" rx="4" fill="#fdfdfd"/><circle cx="1888.2" cy="1074" r="13" fill="#6b9cfb"/><path d="M1884.3 1070.6 a4 4 0 1 1 6.1 3.4 c-1.5 1 -2.1 1.6 -2.1 3.6" fill="none" stroke="#fff" stroke-width="2.1"/><rect x="1887.2" y="1079.6" width="2.2" height="2.4" fill="#fff"/><rect x="0" y="1111.5" width="1920" height="1.2" fill="#dadada"/><rect x="0" y="1140" width="1922" height="1" fill="#a8a8a8"/><rect x="1919.5" y="1116" width="1" height="22" fill="#d6d6d6"/><rect x="1869" y="55" width="2" height="830" fill="#8a8a8a"/><rect x="1899.3" y="72" width="4.4" height="785" fill="#e7e9eb" stroke="#d9d9d9" stroke-width="0.8"/><path d="M1890.1 857.3 H1907.6 L1914 864.3 L1907.6 871.4 H1890.1 Z" fill="#0078d4"/><line x1="1892.5" y1="52.5" x2="1898.5" y2="46.5" stroke="#111" stroke-width="2.6"/><circle cx="1902.7" cy="41.3" r="5.4" fill="#fff" stroke="#555" stroke-width="1.8"/><rect x="1899.2" y="40.3" width="7" height="2.2" fill="#1a16b0"/><rect x="1901.6" y="37.8" width="2.2" height="7" fill="#1a16b0"/><line x1="1891.5" y1="904.5" x2="1898" y2="898" stroke="#111" stroke-width="2.6"/><circle cx="1902.7" cy="893.8" r="5.4" fill="#fff" stroke="#555" stroke-width="1.8"/><rect x="1899" y="892.7" width="7.4" height="2.4" fill="#1a16b0"/><rect x="1920" y="29" width="2" height="1083" fill="#f5f5f5"/><rect x="1920" y="23" width="2" height="18" fill="#fcfcfc"/><rect x="1920" y="1032" width="2" height="47" fill="#dcdcf0"/></g>
</svg>
</body></html>
